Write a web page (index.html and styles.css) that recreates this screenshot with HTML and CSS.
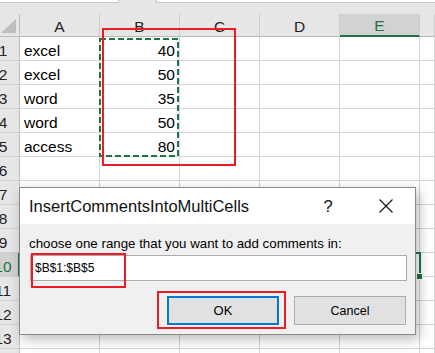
FILE: index.html
```html
<!DOCTYPE html>
<html>
<head>
<meta charset="utf-8">
<link rel="stylesheet" href="styles.css">
</head>
<body>
<div class="app">
  <div class="topbar">
    <div class="namebox"></div>
    <div class="fxbox"></div>
  </div>
  <div class="grid">
    <div class="corner"><svg width="20" height="22" viewBox="0 0 20 22"><polygon points="16,5 16,19 1,19" fill="#bdbdbd"/></svg></div>
    <div class="ch">A</div>
    <div class="ch">B</div>
    <div class="ch">C</div>
    <div class="ch">D</div>
    <div class="ch ch-sel">E</div>
    <div class="ch"></div>

    <div class="rh"><span>1</span></div><div class="c">excel</div><div class="c num">40</div><div class="c"></div><div class="c"></div><div class="c"></div><div class="c"></div>
    <div class="rh"><span>2</span></div><div class="c">excel</div><div class="c num">50</div><div class="c"></div><div class="c"></div><div class="c"></div><div class="c"></div>
    <div class="rh"><span>3</span></div><div class="c">word</div><div class="c num">35</div><div class="c"></div><div class="c"></div><div class="c"></div><div class="c"></div>
    <div class="rh"><span>4</span></div><div class="c">word</div><div class="c num">50</div><div class="c"></div><div class="c"></div><div class="c"></div><div class="c"></div>
    <div class="rh"><span>5</span></div><div class="c">access</div><div class="c num">80</div><div class="c"></div><div class="c"></div><div class="c"></div><div class="c"></div>
    <div class="rh"><span>6</span></div><div class="c"></div><div class="c"></div><div class="c"></div><div class="c"></div><div class="c"></div><div class="c"></div>
    <div class="rh"><span>7</span></div><div class="c"></div><div class="c"></div><div class="c"></div><div class="c"></div><div class="c"></div><div class="c"></div>
    <div class="rh"><span>8</span></div><div class="c"></div><div class="c"></div><div class="c"></div><div class="c"></div><div class="c"></div><div class="c"></div>
    <div class="rh"><span>9</span></div><div class="c"></div><div class="c"></div><div class="c"></div><div class="c"></div><div class="c"></div><div class="c"></div>
    <div class="rh rh-sel"><span>10</span></div><div class="c"></div><div class="c"></div><div class="c"></div><div class="c"></div><div class="c"></div><div class="c"></div>
    <div class="rh"><span>11</span></div><div class="c"></div><div class="c"></div><div class="c"></div><div class="c"></div><div class="c"></div><div class="c"></div>
    <div class="rh"><span>12</span></div><div class="c"></div><div class="c"></div><div class="c"></div><div class="c"></div><div class="c"></div><div class="c"></div>
    <div class="rh"><span>13</span></div><div class="c"></div><div class="c"></div><div class="c"></div><div class="c"></div><div class="c"></div><div class="c"></div>
    <div class="rh"><span>14</span></div><div class="c"></div><div class="c"></div><div class="c"></div><div class="c"></div><div class="c"></div><div class="c"></div>
  </div>

  <svg class="ants" width="82" height="122" viewBox="0 0 82 122"><rect x="1" y="1" width="78" height="117" fill="none" stroke="#217346" stroke-width="2" stroke-dasharray="6 3"/></svg>
  <div class="cellsel"></div>
  <div class="fillhandle"></div>
  <div class="mark mark-range"></div>

  <div class="dlg">
    <div class="dlg-title">
      <span class="dlg-name">InsertCommentsIntoMultiCells</span>
      <span class="dlg-help">?</span>
      <span class="dlg-close"><svg width="14" height="14" viewBox="0 0 14 14"><path d="M0.5 0.5 L13.5 13.5 M13.5 0.5 L0.5 13.5" stroke="#111" stroke-width="1.1" fill="none"/></svg></span>
    </div>
    <div class="dlg-body">
      <div class="dlg-label">choose one range that you want to add comments in:</div>
      <div class="dlg-input">$B$1:$B$5</div>
      <div class="dlg-buttons">
        <div class="btn btn-ok">OK</div>
        <div class="btn">Cancel</div>
      </div>
    </div>
  </div>
  <div class="mark mark-input"></div>
  <div class="mark mark-ok"></div>
</div>
</body>
</html>
```

FILE: styles.css
```css
html, body {
  margin: 0;
  padding: 0;
  background: #ffffff;
}
.app {
  position: relative;
  width: 435px;
  height: 353px;
  overflow: hidden;
  font-family: "Liberation Sans", Arial, sans-serif;
  color: #000;
}
.topbar {
  height: 14px;
  background: #e6e6e6;
  display: flex;
  align-items: flex-start;
}
.namebox {
  width: 119px;
  height: 2px;
  background: #fff;
  border-right: 1px solid #c6c6c6;
  border-bottom: 1px solid #c6c6c6;
  box-sizing: content-box;
  width: 118px;
}
.fxbox {
  margin-left: 37px;
  flex: 1;
  height: 2px;
  background: #fff;
  border-left: 1px solid #c6c6c6;
  border-bottom: 1px solid #c6c6c6;
}
.grid {
  display: grid;
  grid-template-columns: 20px 80px 80px 80px 80px 80px 1fr;
  grid-template-rows: 23px;
  grid-auto-rows: 24px;
}
.corner {
  background: #e6e6e6;
  border-right: 1px solid #bdbdbd;
  border-bottom: 1px solid #bdbdbd;
  box-sizing: border-box;
  overflow: hidden;
}
.corner svg { display: block; }
.ch {
  background: #e6e6e6;
  border-right: 1px solid #cdcdcd;
  border-bottom: 1px solid #b8b8b8;
  box-sizing: border-box;
  display: flex;
  align-items: flex-end;
  justify-content: center;
  font-size: 15.5px;
  color: #222;
}
.ch-sel {
  background: #d2d2d2;
  color: #217346;
  border-bottom: 2px solid #217346;
  padding-top: 1px;
}
.rh {
  background: #e6e6e6;
  border-right: 1px solid #bdbdbd;
  border-bottom: 1px solid #d0d0d0;
  box-sizing: border-box;
  display: flex;
  align-items: flex-end;
  overflow: hidden;
  font-size: 15.5px;
  color: #222;
}
.rh span {
  flex: none;
  width: 34px;
  margin-left: -14px;
  text-align: center;
}
.rh-sel {
  background: #d2d2d2;
  color: #217346;
  border-right: 2px solid #217346;
}
.c {
  border-right: 1px solid #d4d4d4;
  border-bottom: 1px solid #d4d4d4;
  box-sizing: border-box;
  display: flex;
  align-items: flex-end;
  padding-left: 4px;
  font-size: 15.5px;
}
.num {
  justify-content: flex-end;
  padding-left: 0;
  padding-right: 4px;
}
.ants {
  position: absolute;
  left: 99px;
  top: 38px;
}
.cellsel {
  position: absolute;
  left: 338px;
  top: 252px;
  width: 83px;
  height: 26px;
  box-sizing: border-box;
  border: 2px solid #217346;
}
.fillhandle {
  position: absolute;
  left: 417px;
  top: 274px;
  width: 5px;
  height: 5px;
  background: #217346;
  box-shadow: 0 0 0 1px #fff;
}
.mark {
  position: absolute;
  box-sizing: border-box;
  border: 2px solid #ec1c24;
}
.mark-range {
  left: 102px;
  top: 28px;
  width: 134px;
  height: 138px;
}
.mark-input {
  left: 31px;
  top: 253px;
  width: 95px;
  height: 35px;
}
.mark-ok {
  left: 157px;
  top: 291px;
  width: 129px;
  height: 38px;
}
.dlg {
  position: absolute;
  left: 19px;
  top: 187px;
  width: 397px;
  height: 148px;
  box-sizing: border-box;
  border: 1px solid #8a8a8a;
  background: #f0f0f0;
  box-shadow: 3px 4px 12px rgba(0, 0, 0, 0.28);
  display: flex;
  flex-direction: column;
}
.dlg-title {
  height: 36px;
  background: #fff;
  display: flex;
  align-items: center;
  padding-left: 9px;
}
.dlg-name {
  flex: 1;
  font-size: 16.5px;
  color: #111;
}
.dlg-help {
  width: 58px;
  text-align: center;
  font-size: 16.5px;
  color: #111;
}
.dlg-close {
  width: 58px;
  display: flex;
  justify-content: center;
}
.dlg-close svg { display: block; }
.dlg-body {
  flex: 1;
  padding: 12px 9px 0 9px;
  display: flex;
  flex-direction: column;
}
.dlg-label {
  font-size: 13.3px;
  line-height: 15px;
  color: #000;
}
.dlg-input {
  margin-top: 4px;
  margin-left: 1px;
  height: 26px;
  width: 377px;
  box-sizing: border-box;
  border: 1px solid #ababab;
  background: #fff;
  padding-left: 4px;
  font-size: 12px;
  display: flex;
  align-items: center;
}
.dlg-buttons {
  margin-top: 15px;
  display: flex;
  justify-content: flex-end;
  gap: 15px;
}
.btn {
  width: 112px;
  height: 29px;
  box-sizing: border-box;
  border: 1px solid #adadad;
  background: #e1e1e1;
  display: flex;
  align-items: center;
  justify-content: center;
  font-size: 12.5px;
  color: #000;
}
.btn-ok {
  border: 2px solid #0078d7;
  font-size: 13px;
}
```
